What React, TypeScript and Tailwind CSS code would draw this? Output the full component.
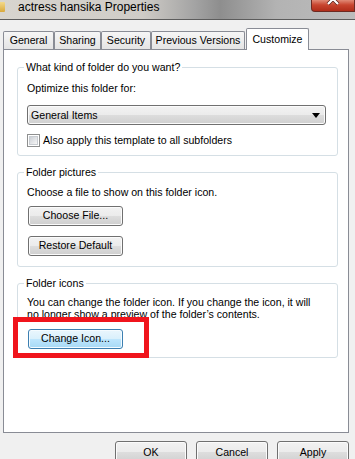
const btnGray =
  "flex items-center justify-center rounded-[3px] border border-[#707070] bg-[linear-gradient(#f2f2f2,#ebebeb_50%,#dddddd_50%,#cfcfcf)] shadow-[inset_0_0_0_1px_#fbfbfb] text-black";

const btnBlue =
  "flex items-center justify-center rounded-[3px] border border-[#3c7fb1] bg-[linear-gradient(#eaf6fd,#d9f0fc_50%,#bee6fd_50%,#a7d9f5)] shadow-[inset_0_0_0_1px_#f4fbff] text-black";

function GroupBox({ label, className, children }: { label: string; className?: string; children: React.ReactNode }) {
  return (
    <div className={`relative ml-[13px] w-[321px] rounded-[3px] border border-[#d5dfe5] pl-[9px] ${className ?? ""}`}>
      <span className="absolute left-[6px] top-[-7px] bg-white px-[2px] leading-[13px]">{label}</span>
      {children}
    </div>
  );
}

function Tab({ label, width }: { label: string; width: string }) {
  return (
    <div
      className={`flex h-[18px] items-center justify-center rounded-t-[2px] border border-b-0 border-[#898c95] bg-[linear-gradient(#f6f6f6,#e4e4e4)] pt-[1px] ${width}`}
    >
      {label}
    </div>
  );
}

export default function App() {
  return (
    <div className="flex h-[459px] w-[355px] flex-col overflow-hidden bg-[#f0f0f0] font-['Liberation_Sans',Arial,sans-serif] text-[10.6px] text-black">
      {/* title bar */}
      <div className="flex h-[20px] shrink-0 items-start border-b border-[#5c5c5c] bg-[linear-gradient(90deg,#d8d5cf,#cfccc7_40%,#a3a3a3_55%,#8e8e8e_62%,#b3b3b3_78%,#bcbcbc)]">
        <div className="mt-[2px] h-[10px] w-[5px] rounded-r-[1px] bg-[linear-gradient(#f3d98a,#d9a93c)]" />
        <span className="ml-[13px] mt-[0px] text-[12px] leading-[14px]">actress hansika Properties</span>
        <div className="ml-auto flex h-[12px] w-[44px] items-end justify-center overflow-hidden rounded-bl-[4px] border border-t-0 border-[#6d2a22] bg-[linear-gradient(#e08a76,#c8452f_45%,#b02d1a)]">
          <svg width="14" height="12" viewBox="0 0 14 12" className="mb-[1px]">
            <path d="M2 -4 L12 6 M12 -4 L2 6" stroke="#5a1d14" strokeWidth="3.6" />
            <path d="M2 -4 L12 6 M12 -4 L2 6" stroke="#ffffff" strokeWidth="2.2" />
          </svg>
        </div>
      </div>

      {/* tabs */}
      <div className="flex h-[29px] shrink-0 items-end pl-[3px]">
        <Tab label="General" width="w-[51px]" />
        <Tab label="Sharing" width="w-[47px]" />
        <Tab label="Security" width="w-[50px]" />
        <Tab label="Previous Versions" width="w-[94px]" />
        <div className="relative z-10 -mb-px ml-[1px] flex h-[22px] w-[63px] items-start justify-center rounded-t-[2px] border border-b-0 border-[#898c95] bg-white pt-[3px]">
          Customize
        </div>
      </div>

      {/* panel */}
      <div className="ml-[3px] flex h-[384px] w-[346px] shrink-0 flex-col border border-[#898c95] bg-white">
        <GroupBox label="What kind of folder do you want?" className="mt-[17px] pb-[8px]">
          <div className="mt-[14px] leading-[13px]">Optimize this folder for:</div>
          <div className={`mt-[10px] h-[20px] w-[299px] !justify-between pl-[3px] pr-[5px] ${btnGray}`}>
            <span className="pt-[1px]">General Items</span>
            <svg width="8" height="5" viewBox="0 0 8 5">
              <path d="M0 0 H8 L4 5 Z" fill="#000" />
            </svg>
          </div>
          <div className="mt-[9px] flex h-[13px] items-center">
            <div className="flex h-[13px] w-[13px] items-center justify-center border border-[#8e8f8f] bg-white">
              <div className="h-[9px] w-[9px] border border-[#c8ccd1] bg-[linear-gradient(135deg,#cbcfd5,#f6f6f6)]" />
            </div>
            <span className="ml-[3px] leading-[13px]">Also apply this template to all subfolders</span>
          </div>
        </GroupBox>

        <GroupBox label="Folder pictures" className="mt-[16px] pb-[10px]">
          <div className="mt-[13px] leading-[13px]">Choose a file to show on this folder icon.</div>
          <div className={`ml-[1px] mt-[7px] h-[20px] w-[95px] ${btnGray}`}>Choose File...</div>
          <div className={`ml-[1px] mt-[10px] h-[20px] w-[95px] ${btnGray}`}>Restore Default</div>
        </GroupBox>

        <GroupBox label="Folder icons" className="mt-[16px] pb-[8px]">
          <div className="mt-[12px] leading-[12px]">
            You can change the folder icon. If you change the icon, it will
            <br />
            no longer show a preview of the folder’s contents.
          </div>
          <div className={`ml-[1px] mt-[9px] h-[20px] w-[95px] ${btnBlue}`}>Change Icon...</div>
          <div className="absolute left-[-5px] top-[33px] h-[41px] w-[136px] border-[5px] border-[#f0141c]" />
        </GroupBox>
      </div>

      {/* dialog buttons */}
      <div className="mt-[8px] flex justify-end gap-[9px] pr-[6px]">
        <div className={`h-[23px] w-[72px] ${btnGray}`}>OK</div>
        <div className={`h-[23px] w-[72px] ${btnGray}`}>Cancel</div>
        <div className={`h-[23px] w-[72px] ${btnGray}`}>Apply</div>
      </div>
    </div>
  );
}
